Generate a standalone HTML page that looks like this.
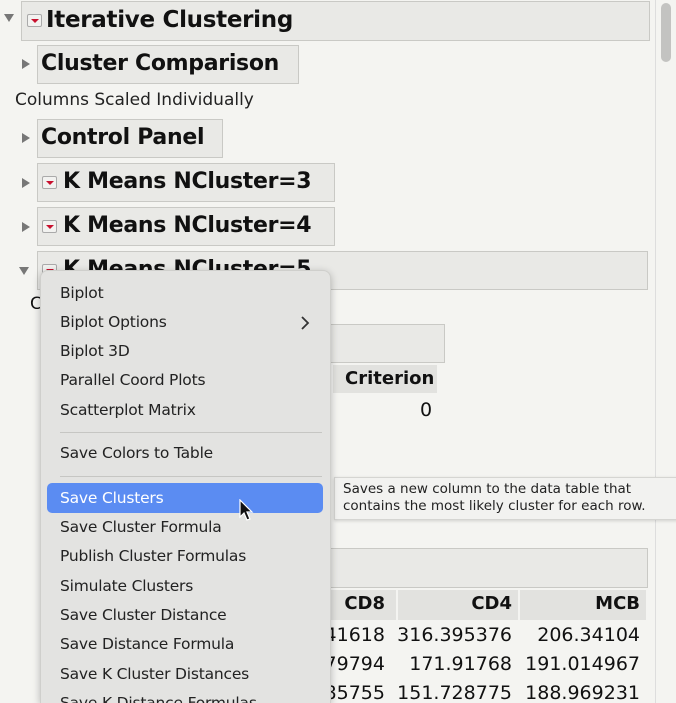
<!DOCTYPE html>
<html style="width:676px;height:703px;overflow:hidden"><head><style>
*{margin:0;padding:0;box-sizing:border-box}
body{width:676px;height:703px;overflow:hidden;background:#f4f4f1;font-family:"DejaVu Sans","Liberation Sans",sans-serif;position:relative;color:#111}
.a{position:absolute}
.box{position:absolute;background:#e9e9e6;border:1px solid #c9c9c5}
.h{position:absolute;font-weight:bold;font-size:22px;white-space:nowrap;letter-spacing:-0.3px}
.tri{position:absolute;width:0;height:0}
.tr{border-top:5px solid transparent;border-bottom:5px solid transparent;border-left:8px solid #777}
.td{border-left:5px solid transparent;border-right:5px solid transparent;border-top:8px solid #777}
.dd{position:absolute;width:15px;height:13px;border:1px solid #aaa;border-radius:2px;background:#f2f2f0}
.dd:after{content:"";position:absolute;left:3px;top:4px;border-left:4px solid transparent;border-right:4px solid transparent;border-top:4px solid #c8102e}
.menu{position:absolute;left:40px;top:270px;width:291px;height:433px;background:#e3e3e1;border-radius:8px 8px 0 0;box-shadow:0 2px 8px rgba(0,0,0,.25);border:1px solid #cfcfcc;border-bottom:none;overflow:hidden}
.mi{position:absolute;left:19px;font-size:15.5px;color:#222;white-space:nowrap;letter-spacing:-0.2px}
.sep{position:absolute;left:19px;width:262px;height:1px;background:#c6c6c3}
.num{position:absolute;font-size:19px;white-space:nowrap;text-align:right}
</style></head><body>
<div class="a" style="left:655px;top:0;width:1px;height:703px;background:#ddd"></div>
<div class="a" style="left:661px;top:3px;width:10px;height:59px;background:#c3c3c1;border-radius:5px"></div>

<div class="tri td" style="left:4px;top:14px"></div>
<div class="box" style="left:21px;top:1px;width:629px;height:40px"></div>
<div class="dd" style="left:27px;top:14px"></div>
<div class="h" style="left:46px;top:7px;font-size:23px">Iterative Clustering</div>

<div class="tri tr" style="left:22px;top:59px"></div>
<div class="box" style="left:37px;top:45px;width:262px;height:39px"></div>
<div class="h" style="left:41px;top:51px">Cluster Comparison</div>

<div class="a" style="left:15px;top:90px;font-size:17px;color:#222">Columns Scaled Individually</div>

<div class="tri tr" style="left:22px;top:133px"></div>
<div class="box" style="left:37px;top:119px;width:186px;height:39px"></div>
<div class="h" style="left:41px;top:125px">Control Panel</div>

<div class="tri tr" style="left:22px;top:178px"></div>
<div class="box" style="left:37px;top:163px;width:298px;height:39px"></div>
<div class="dd" style="left:42px;top:176px"></div>
<div class="h" style="left:63px;top:169px">K Means NCluster=3</div>

<div class="tri tr" style="left:22px;top:222px"></div>
<div class="box" style="left:37px;top:207px;width:298px;height:39px"></div>
<div class="dd" style="left:42px;top:220px"></div>
<div class="h" style="left:63px;top:213px">K Means NCluster=4</div>

<div class="tri td" style="left:19px;top:267px"></div>
<div class="box" style="left:37px;top:251px;width:611px;height:39px"></div>
<div class="dd" style="left:42px;top:264px"></div>
<div class="h" style="left:63px;top:257px">K Means NCluster=5</div>
<div class="a" style="left:30px;top:294px;font-size:17px">C</div>

<div class="box" style="left:320px;top:324px;width:125px;height:39px"></div>
<div class="a" style="left:333px;top:365px;width:104px;height:28px;background:#e2e2df"></div>
<div class="a" style="left:345px;top:368px;font-size:18px;font-weight:bold">Criterion</div>
<div class="a" style="left:420px;top:399px;font-size:19px">0</div>

<div class="box" style="left:320px;top:548px;width:328px;height:40px"></div>
<div class="a" style="left:330px;top:590px;width:66px;height:30px;background:#e2e2df"></div>
<div class="a" style="left:398px;top:590px;width:120px;height:30px;background:#e2e2df"></div>
<div class="a" style="left:520px;top:590px;width:126px;height:30px;background:#e2e2df"></div>
<div class="num" style="right:291px;top:593px;font-weight:bold;font-size:18px">CD8</div>
<div class="num" style="right:164px;top:593px;font-weight:bold;font-size:18px">CD4</div>
<div class="num" style="right:36px;top:593px;font-weight:bold;font-size:18px">MCB</div>
<div class="num" style="right:291px;top:624px">41618</div>
<div class="num" style="right:164px;top:624px">316.395376</div>
<div class="num" style="right:36px;top:624px">206.34104</div>
<div class="num" style="right:291px;top:653px">79794</div>
<div class="num" style="right:164px;top:653px">171.91768</div>
<div class="num" style="right:36px;top:653px">191.014967</div>
<div class="num" style="right:291px;top:682px">85755</div>
<div class="num" style="right:164px;top:682px">151.728775</div>
<div class="num" style="right:36px;top:682px">188.969231</div>

<div class="a" style="left:334px;top:477px;width:345px;height:43px;background:#f2f2f0;border:1px solid #d5d5d2;box-shadow:0 1px 3px rgba(0,0,0,.15)"></div>
<div class="a" style="left:343px;top:481px;font-size:13.5px;line-height:17px;color:#222">Saves a new column to the data table that<br>contains the most likely cluster for each row.</div>

<div class="menu">
<div class="mi" style="top:13px">Biplot</div>
<div class="mi" style="top:42px">Biplot Options</div>
<svg class="a" style="left:259px;top:45px" width="10" height="14" viewBox="0 0 10 14"><path d="M2 1 L8 7 L2 13" fill="none" stroke="#333" stroke-width="1.8"/></svg>
<div class="mi" style="top:71px">Biplot 3D</div>
<div class="mi" style="top:100px">Parallel Coord Plots</div>
<div class="mi" style="top:130px">Scatterplot Matrix</div>
<div class="sep" style="top:161px"></div>
<div class="mi" style="top:173px">Save Colors to Table</div>
<div class="sep" style="top:205px"></div>
<div class="a" style="left:6px;top:212px;width:276px;height:30px;background:#5b8cf2;border-radius:5px"></div>
<div class="mi" style="top:218px;color:#fff">Save Clusters</div>
<div class="mi" style="top:247px">Save Cluster Formula</div>
<div class="mi" style="top:276px">Publish Cluster Formulas</div>
<div class="mi" style="top:306px">Simulate Clusters</div>
<div class="mi" style="top:335px">Save Cluster Distance</div>
<div class="mi" style="top:364px">Save Distance Formula</div>
<div class="mi" style="top:394px">Save K Cluster Distances</div>
<div class="mi" style="top:423px">Save K Distance Formulas</div>
</div>
<svg class="a" style="left:239px;top:499px" width="16" height="24" viewBox="0 0 16 24"><path d="M1 1 L1 18 L5 14 L8 21 L11 20 L8 13 L13 13 Z" fill="#111" stroke="#fff" stroke-width="1.2"/></svg>
</body></html>
